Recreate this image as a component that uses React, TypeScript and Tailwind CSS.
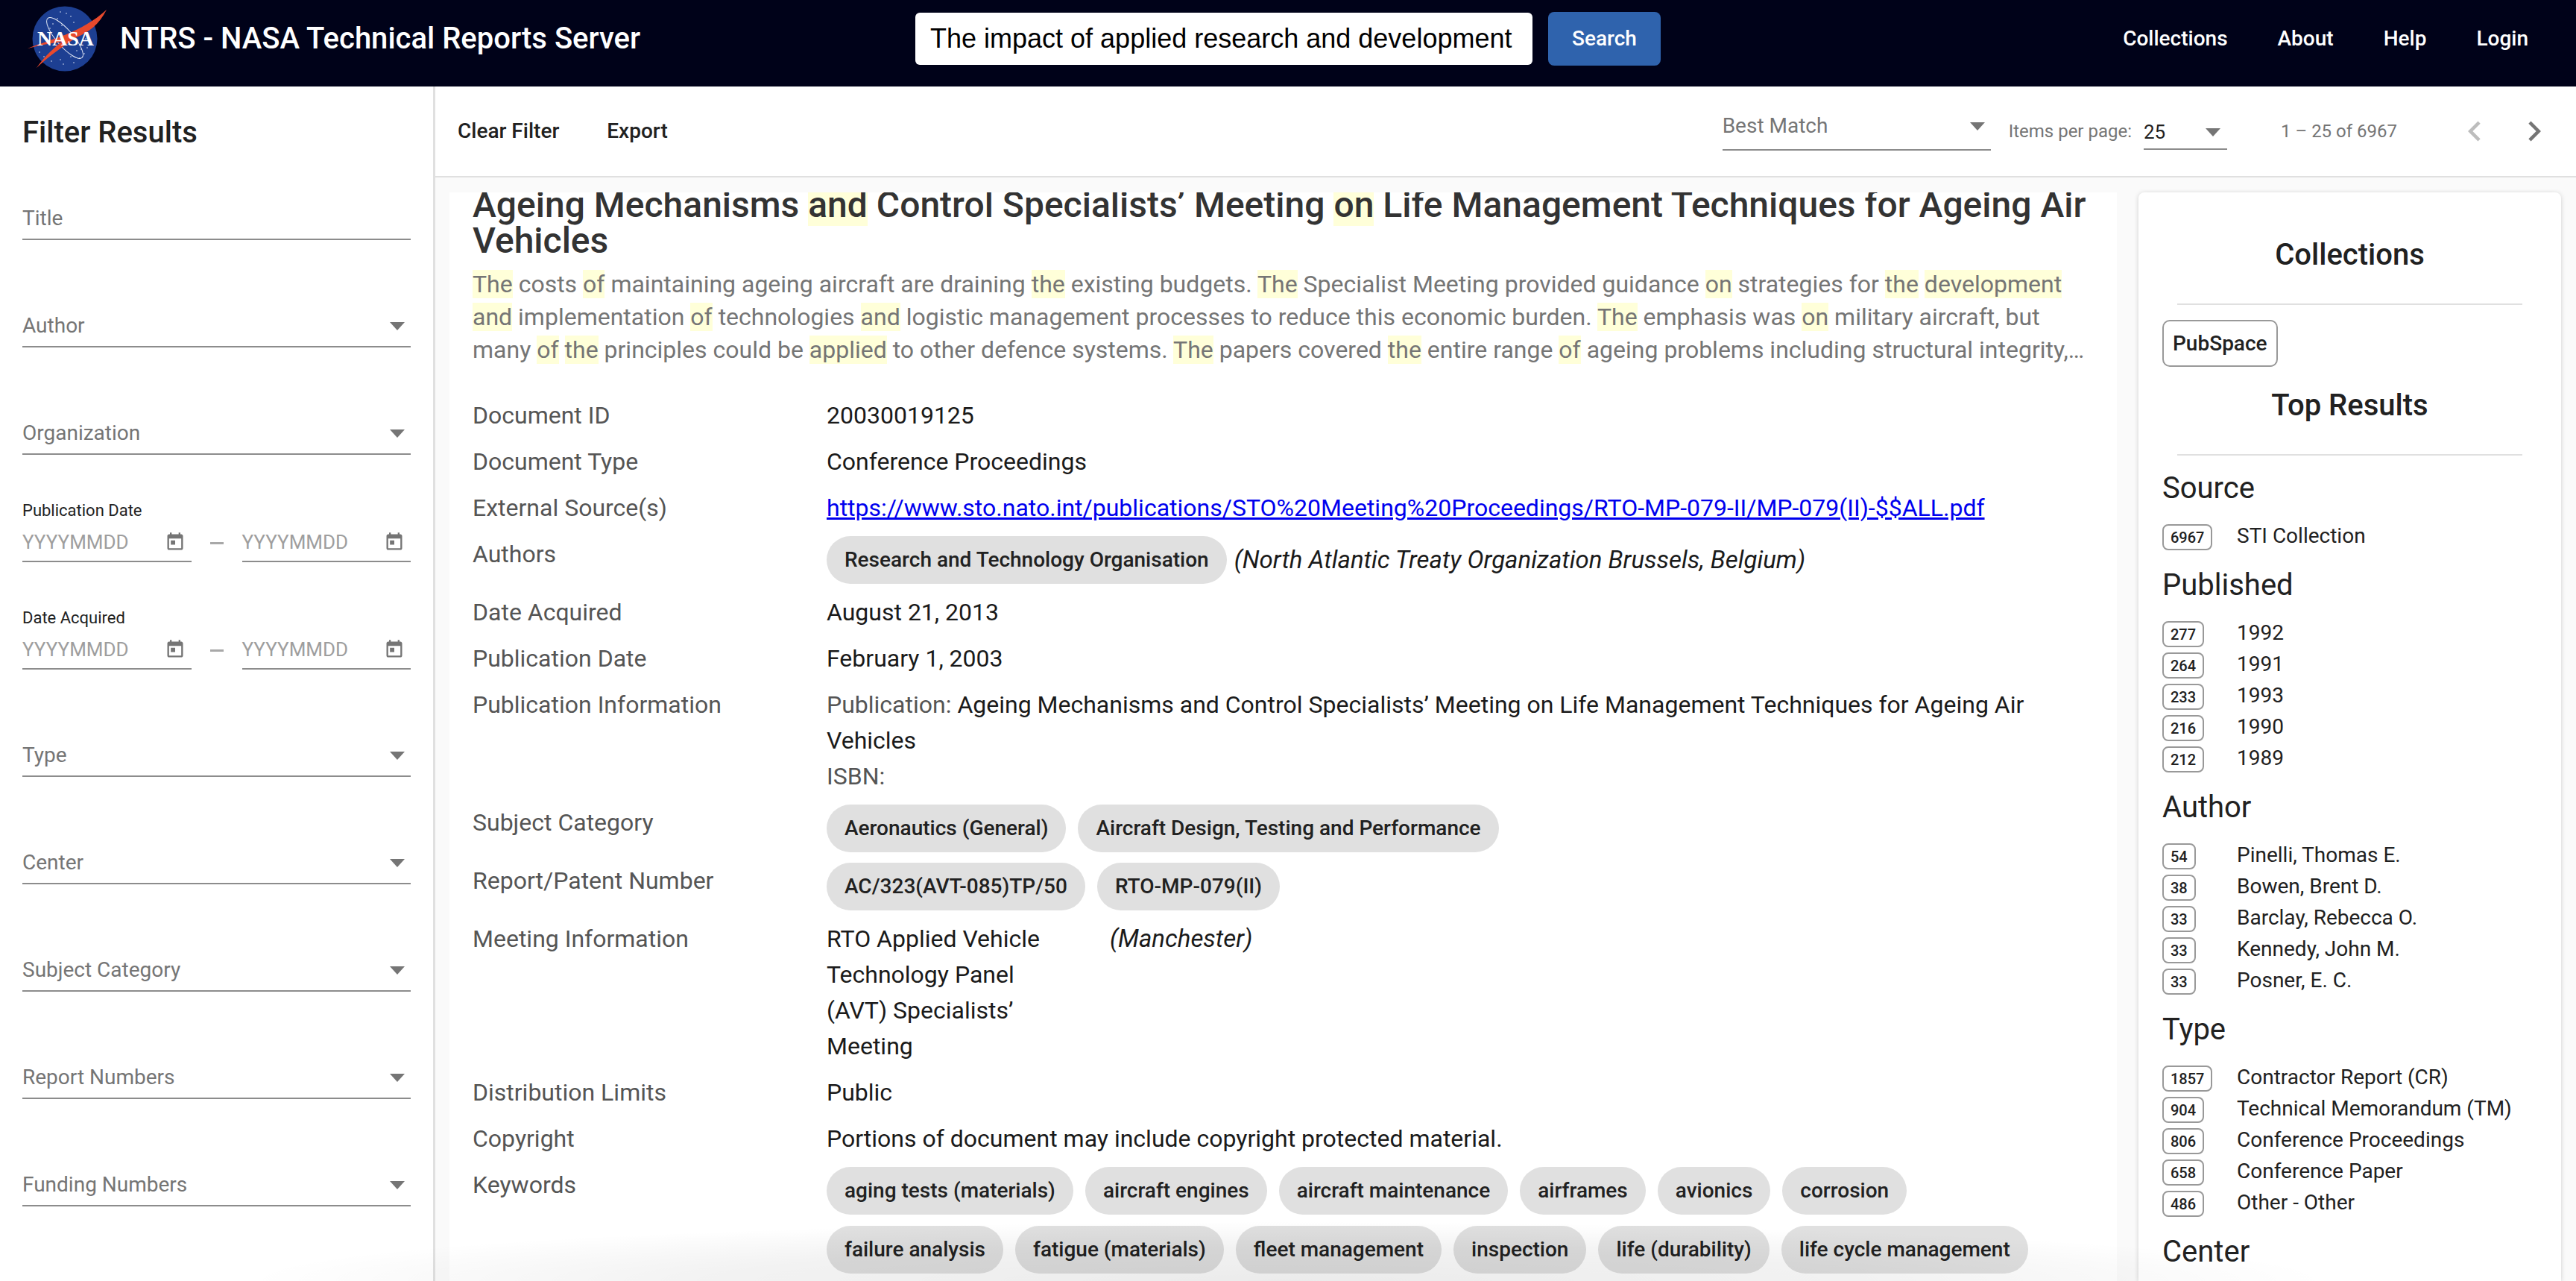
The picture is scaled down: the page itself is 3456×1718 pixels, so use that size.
import { Fragment } from 'react';

const selectFields = ['Type', 'Center', 'Subject Category', 'Report Numbers', 'Funding Numbers'];

const topResults = [
  { title: 'Source', rows: [['6967', 'STI Collection']] },
  {
    title: 'Published',
    rows: [['277', '1992'], ['264', '1991'], ['233', '1993'], ['216', '1990'], ['212', '1989']],
  },
  {
    title: 'Author',
    rows: [
      ['54', 'Pinelli, Thomas E.'],
      ['38', 'Bowen, Brent D.'],
      ['33', 'Barclay, Rebecca O.'],
      ['33', 'Kennedy, John M.'],
      ['33', 'Posner, E. C.'],
    ],
  },
  {
    title: 'Type',
    rows: [
      ['1857', 'Contractor Report (CR)'],
      ['904', 'Technical Memorandum (TM)'],
      ['806', 'Conference Proceedings'],
      ['658', 'Conference Paper'],
      ['486', 'Other - Other'],
    ],
  },
];

const keywords = [
  'aging tests (materials)',
  'aircraft engines',
  'aircraft maintenance',
  'airframes',
  'avionics',
  'corrosion',
  'failure analysis',
  'fatigue (materials)',
  'fleet management',
  'inspection',
  'life (durability)',
  'life cycle management',
];

const stars = [
  [44, 8], [52, 10], [58, 14], [40, 17], [62, 22], [34, 24], [46, 26], [30, 30], [74, 30],
  [16, 62], [22, 68], [30, 66], [32, 74], [44, 72], [48, 78], [58, 68], [62, 76], [72, 58],
  [76, 64], [80, 56], [70, 70], [84, 50], [66, 60], [78, 44],
];

function NasaLogo() {
  return (
    <svg viewBox="0 0 106 88" className="w-[106px] h-[88px] shrink-0">
      <circle cx="50" cy="44" r="43.5" fill="#1d3f92" />
      <g fill="#dfe6f5">
        {stars.map(([x, y]) => (
          <circle key={`${x}-${y}`} cx={x} cy={y} r="0.8" />
        ))}
      </g>
      <ellipse cx="50" cy="43" rx="11" ry="35" fill="none" stroke="#e4e9f5" strokeWidth="1" transform="rotate(-41 50 43)" />
      <path d="M0 57 C30 45 72 36 106 5 C96 25 82 35 66 42 C46 55 28 68 12 83 C24 66 37 55 46 48 C30 50 15 53 0 57Z" fill="#e8492c" />
      <text x="51" y="53" textAnchor="middle" fill="#fff" fontSize="28" fontWeight="700" textLength="76" lengthAdjust="spacingAndGlyphs" fontFamily="'Liberation Serif', serif">
        NASA
      </text>
    </svg>
  );
}

function Arrow() {
  return <span className="w-0 h-0 border-x-[10px] border-t-[11px] border-x-transparent border-t-[#757575]" />;
}

function SelectField({ label, first }: { label: string; first?: boolean }) {
  return (
    <div className={`flex flex-col justify-end shrink-0 ${first ? 'h-[86px]' : 'h-[144px]'}`}>
      <div className="flex items-center justify-between h-[56px] pr-2 border-b-2 border-[#8c8c8c] text-[28px] text-[#757575]">
        <span>{label}</span>
        {label !== 'Title' && <Arrow />}
      </div>
    </div>
  );
}

function DateInput() {
  return (
    <div className="flex-1 flex items-center justify-between h-[52px] pr-[8px] border-b-2 border-[#8c8c8c] text-[26px] text-[#9e9e9e]">
      <span>YYYYMMDD</span>
      <svg viewBox="0 0 24 24" className="w-[28px] h-[28px]" fill="#757575">
        <path d="M19 3h-1V1h-2v2H8V1H6v2H5c-1.11 0-1.99.9-1.99 2L3 19c0 1.1.89 2 2 2h14c1.1 0 2-.9 2-2V5c0-1.1-.9-2-2-2zm0 16H5V8h14v11zM7 10h5v5H7z" />
      </svg>
    </div>
  );
}

function DateField({ label }: { label: string }) {
  return (
    <div className="flex flex-col justify-end h-[144px] shrink-0">
      <div className="text-[22px] leading-[30px] text-[#222] mb-[2px]">{label}</div>
      <div className="flex items-center">
        <DateInput />
        <span className="w-[18px] h-[3px] mx-[25px] bg-[#a8a8a8]" />
        <DateInput />
      </div>
    </div>
  );
}

function Chip({ children }: { children: string }) {
  return (
    <span className="inline-flex items-center h-[64px] px-[24px] rounded-full bg-[#e0e0e0] text-[28px] font-medium text-[#212121] whitespace-nowrap">
      {children}
    </span>
  );
}

function Mark({ children }: { children: string }) {
  return <span className="bg-[#ffffd9]">{children}</span>;
}

function Row({ label, children }: { label: string; children: React.ReactNode }) {
  return (
    <Fragment>
      <div className="text-[#555]">{label}</div>
      <div className="text-[#1a1a1a]">{children}</div>
    </Fragment>
  );
}

export default function App() {
  return (
    <div className="relative h-[1718px] w-[3456px] overflow-hidden bg-white font-['Roboto',sans-serif] flex flex-col">
      <header className="h-[116px] shrink-0 bg-[#000219] flex items-center pb-[13px] text-white">
        <div className="ml-[37px] mr-[18px]">
          <NasaLogo />
        </div>
        <h1 className="text-[40px] font-medium w-[1067px]">NTRS - NASA Technical Reports Server</h1>
        <div className="w-[828px] h-[70px] bg-white rounded-[6px] flex items-center px-[20px] font-['Liberation_Sans',sans-serif] text-[36px] text-black whitespace-nowrap overflow-hidden">
          The impact of applied research and development
        </div>
        <button className="ml-[21px] w-[151px] h-[72px] rounded-[8px] bg-[#2f63ad] text-[28px] font-medium">Search</button>
        <nav className="ml-auto mr-[64px] flex gap-[67px] text-[28px] font-medium">
          <span>Collections</span>
          <span>About</span>
          <span>Help</span>
          <span>Login</span>
        </nav>
      </header>

      <div className="flex flex-1 min-h-0">
        <aside className="w-[584px] shrink-0 border-r-[3px] border-[#e0e0e0] px-[30px]">
          <h2 className="h-[120px] pt-[3px] flex items-center text-[40px] font-medium text-[#212121]">Filter Results</h2>
          <SelectField label="Title" first />
          <SelectField label="Author" />
          <SelectField label="Organization" />
          <DateField label="Publication Date" />
          <DateField label="Date Acquired" />
          {selectFields.map((f) => (
            <SelectField key={f} label={f} />
          ))}
        </aside>

        <div className="flex-1 min-w-0 flex flex-col">
          <div className="h-[122px] shrink-0 border-b-2 border-[#e0e0e0] flex items-center pl-[30px] pr-[29px] text-[#212121]">
            <span className="text-[28px] font-medium">Clear Filter</span>
            <span className="ml-[64px] text-[28px] font-medium">Export</span>
            <div className="ml-auto w-[360px] h-[56px] -mt-[4px] border-b-2 border-[#8c8c8c] flex items-center justify-between pr-[8px] pb-[8px] text-[28px] text-[#757575]">
              <span>Best Match</span>
              <Arrow />
            </div>
            <span className="ml-[24px] text-[24px] text-[#757575]">Items per page:</span>
            <div className="ml-[16px] w-[112px] h-[46px] mt-[4px] border-b-2 border-[#8c8c8c] flex items-center justify-between pr-[9px] text-[26px] text-[#212121]">
              <span>25</span>
              <Arrow />
            </div>
            <span className="ml-[72px] text-[24px] text-[#757575]">1 – 25 of 6967</span>
            <svg viewBox="0 0 24 24" className="ml-[77px] w-[54px] h-[54px]" fill="#bdbdbd">
              <path d="M15.41 7.41L14 6l-6 6 6 6 1.41-1.41L10.83 12z" />
            </svg>
            <svg viewBox="0 0 24 24" className="ml-[26px] w-[54px] h-[54px]" fill="#757575">
              <path d="M10 6L8.59 7.41 13.17 12l-4.58 4.59L10 18l6-6z" />
            </svg>
          </div>

          <div className="flex-1 min-h-0 bg-[#fafafa] flex pl-[19px] pr-[20px] pt-[20px] gap-[29px]">
            <main className="w-[2237px] shrink-0 bg-white pl-[31px] pr-[36px] overflow-hidden">
              <h2 className="-mt-[7px] text-[48px] leading-[48px] font-medium text-[#333]">
                Ageing Mechanisms <Mark>and</Mark> Control Specialists’ Meeting <Mark>on</Mark> Life Management Techniques for Ageing Air Vehicles
              </h2>
              <p className="mt-[12px] text-[32px] leading-[44px] text-[#757575] line-clamp-3">
                <Mark>The</Mark> costs <Mark>of</Mark> maintaining ageing aircraft are draining <Mark>the</Mark> existing budgets. <Mark>The</Mark> Specialist Meeting provided guidance <Mark>on</Mark> strategies for <Mark>the</Mark> <Mark>development</Mark> <Mark>and</Mark> implementation <Mark>of</Mark> technologies <Mark>and</Mark> logistic management processes to reduce this economic burden. <Mark>The</Mark> emphasis was <Mark>on</Mark> military aircraft, but many <Mark>of</Mark> <Mark>the</Mark> principles could be <Mark>applied</Mark> to other defence systems. <Mark>The</Mark> papers covered <Mark>the</Mark> entire range <Mark>of</Mark> ageing problems including structural integrity, corrosion, engines and avionics.
              </p>
              <div className="mt-[42px] grid grid-cols-[475px_1fr] gap-y-[14px] text-[32px] leading-[48px]">
                <Row label="Document ID">20030019125</Row>
                <Row label="Document Type">Conference Proceedings</Row>
                <Row label="External Source(s)">
                  <span className="text-[#0000ee] underline">https://www.sto.nato.int/publications/STO%20Meeting%20Proceedings/RTO-MP-079-II/MP-079(II)-$$ALL.pdf</span>
                </Row>
                <Row label="Authors">
                  <div className="flex items-center gap-[10px]">
                    <Chip>Research and Technology Organisation</Chip>
                    <i className="text-[33px]">(North Atlantic Treaty Organization Brussels, Belgium)</i>
                  </div>
                </Row>
                <Row label="Date Acquired">August 21, 2013</Row>
                <Row label="Publication Date">February 1, 2003</Row>
                <Row label="Publication Information">
                  <span className="text-[#555]">Publication: </span>
                  Ageing Mechanisms and Control Specialists’ Meeting on Life Management Techniques for Ageing Air Vehicles
                  <div className="text-[#555]">ISBN:</div>
                </Row>
                <Row label="Subject Category">
                  <div className="flex gap-[16px]">
                    <Chip>Aeronautics (General)</Chip>
                    <Chip>Aircraft Design, Testing and Performance</Chip>
                  </div>
                </Row>
                <Row label="Report/Patent Number">
                  <div className="flex gap-[16px]">
                    <Chip>AC/323(AVT-085)TP/50</Chip>
                    <Chip>RTO-MP-079(II)</Chip>
                  </div>
                </Row>
                <Row label="Meeting Information">
                  <div className="flex">
                    <div className="w-[380px]">
                      RTO Applied Vehicle
                      <br />
                      Technology Panel
                      <br />
                      (AVT) Specialists’
                      <br />
                      Meeting
                    </div>
                    <i className="text-[33px]">(Manchester)</i>
                  </div>
                </Row>
                <Row label="Distribution Limits">Public</Row>
                <Row label="Copyright">Portions of document may include copyright protected material.</Row>
                <Row label="Keywords">
                  <div className="flex flex-wrap gap-x-[16px] gap-y-[15px] w-[1640px]">
                    {keywords.map((k) => (
                      <Chip key={k}>{k}</Chip>
                    ))}
                  </div>
                </Row>
              </div>
            </main>

            <section className="w-[567px] shrink-0 bg-white rounded-t-[8px] shadow-[0_1px_6px_rgba(0,0,0,0.18)] px-[32px] text-[#212121] overflow-hidden">
              <h3 className="pt-[62px] text-center text-[40px] leading-[44px] font-medium">Collections</h3>
              <hr className="mt-[43px] mx-[20px] border-t-2 border-[#e0e0e0]" />
              <span className="mt-[20px] inline-flex items-center h-[63px] px-[12px] rounded-[10px] border-2 border-[#999] text-[28px] font-medium">PubSpace</span>
              <h3 className="mt-[30px] text-center text-[40px] leading-[44px] font-medium">Top Results</h3>
              <hr className="mt-[43px] mx-[20px] border-t-2 border-[#e0e0e0]" />
              <div className="mt-[22px] flex flex-col gap-[27px]">
                {topResults.map((group) => (
                  <div key={group.title}>
                    <h4 className="text-[40px] leading-[44px]">{group.title}</h4>
                    <div className="mt-[24px] flex flex-col gap-[7px]">
                      {group.rows.map(([count, label]) => (
                        <div key={label} className="flex items-center h-[35px] text-[28px]">
                          <div className="w-[100px] shrink-0">
                            <span className="inline-flex items-center h-[35px] px-[9px] rounded-[8px] border-2 border-[#999] text-[20px] font-medium">{count}</span>
                          </div>
                          <span>{label}</span>
                        </div>
                      ))}
                    </div>
                  </div>
                ))}
                <h4 className="text-[40px] leading-[44px]">Center</h4>
              </div>
            </section>
          </div>
        </div>
      </div>

      <div className="absolute inset-x-0 bottom-0 h-[80px] pointer-events-none bg-[radial-gradient(ellipse_1400px_80px_at_50%_100%,rgba(0,0,0,0.08),rgba(0,0,0,0.05)_55%,rgba(0,0,0,0))]" />
    </div>
  );
}
